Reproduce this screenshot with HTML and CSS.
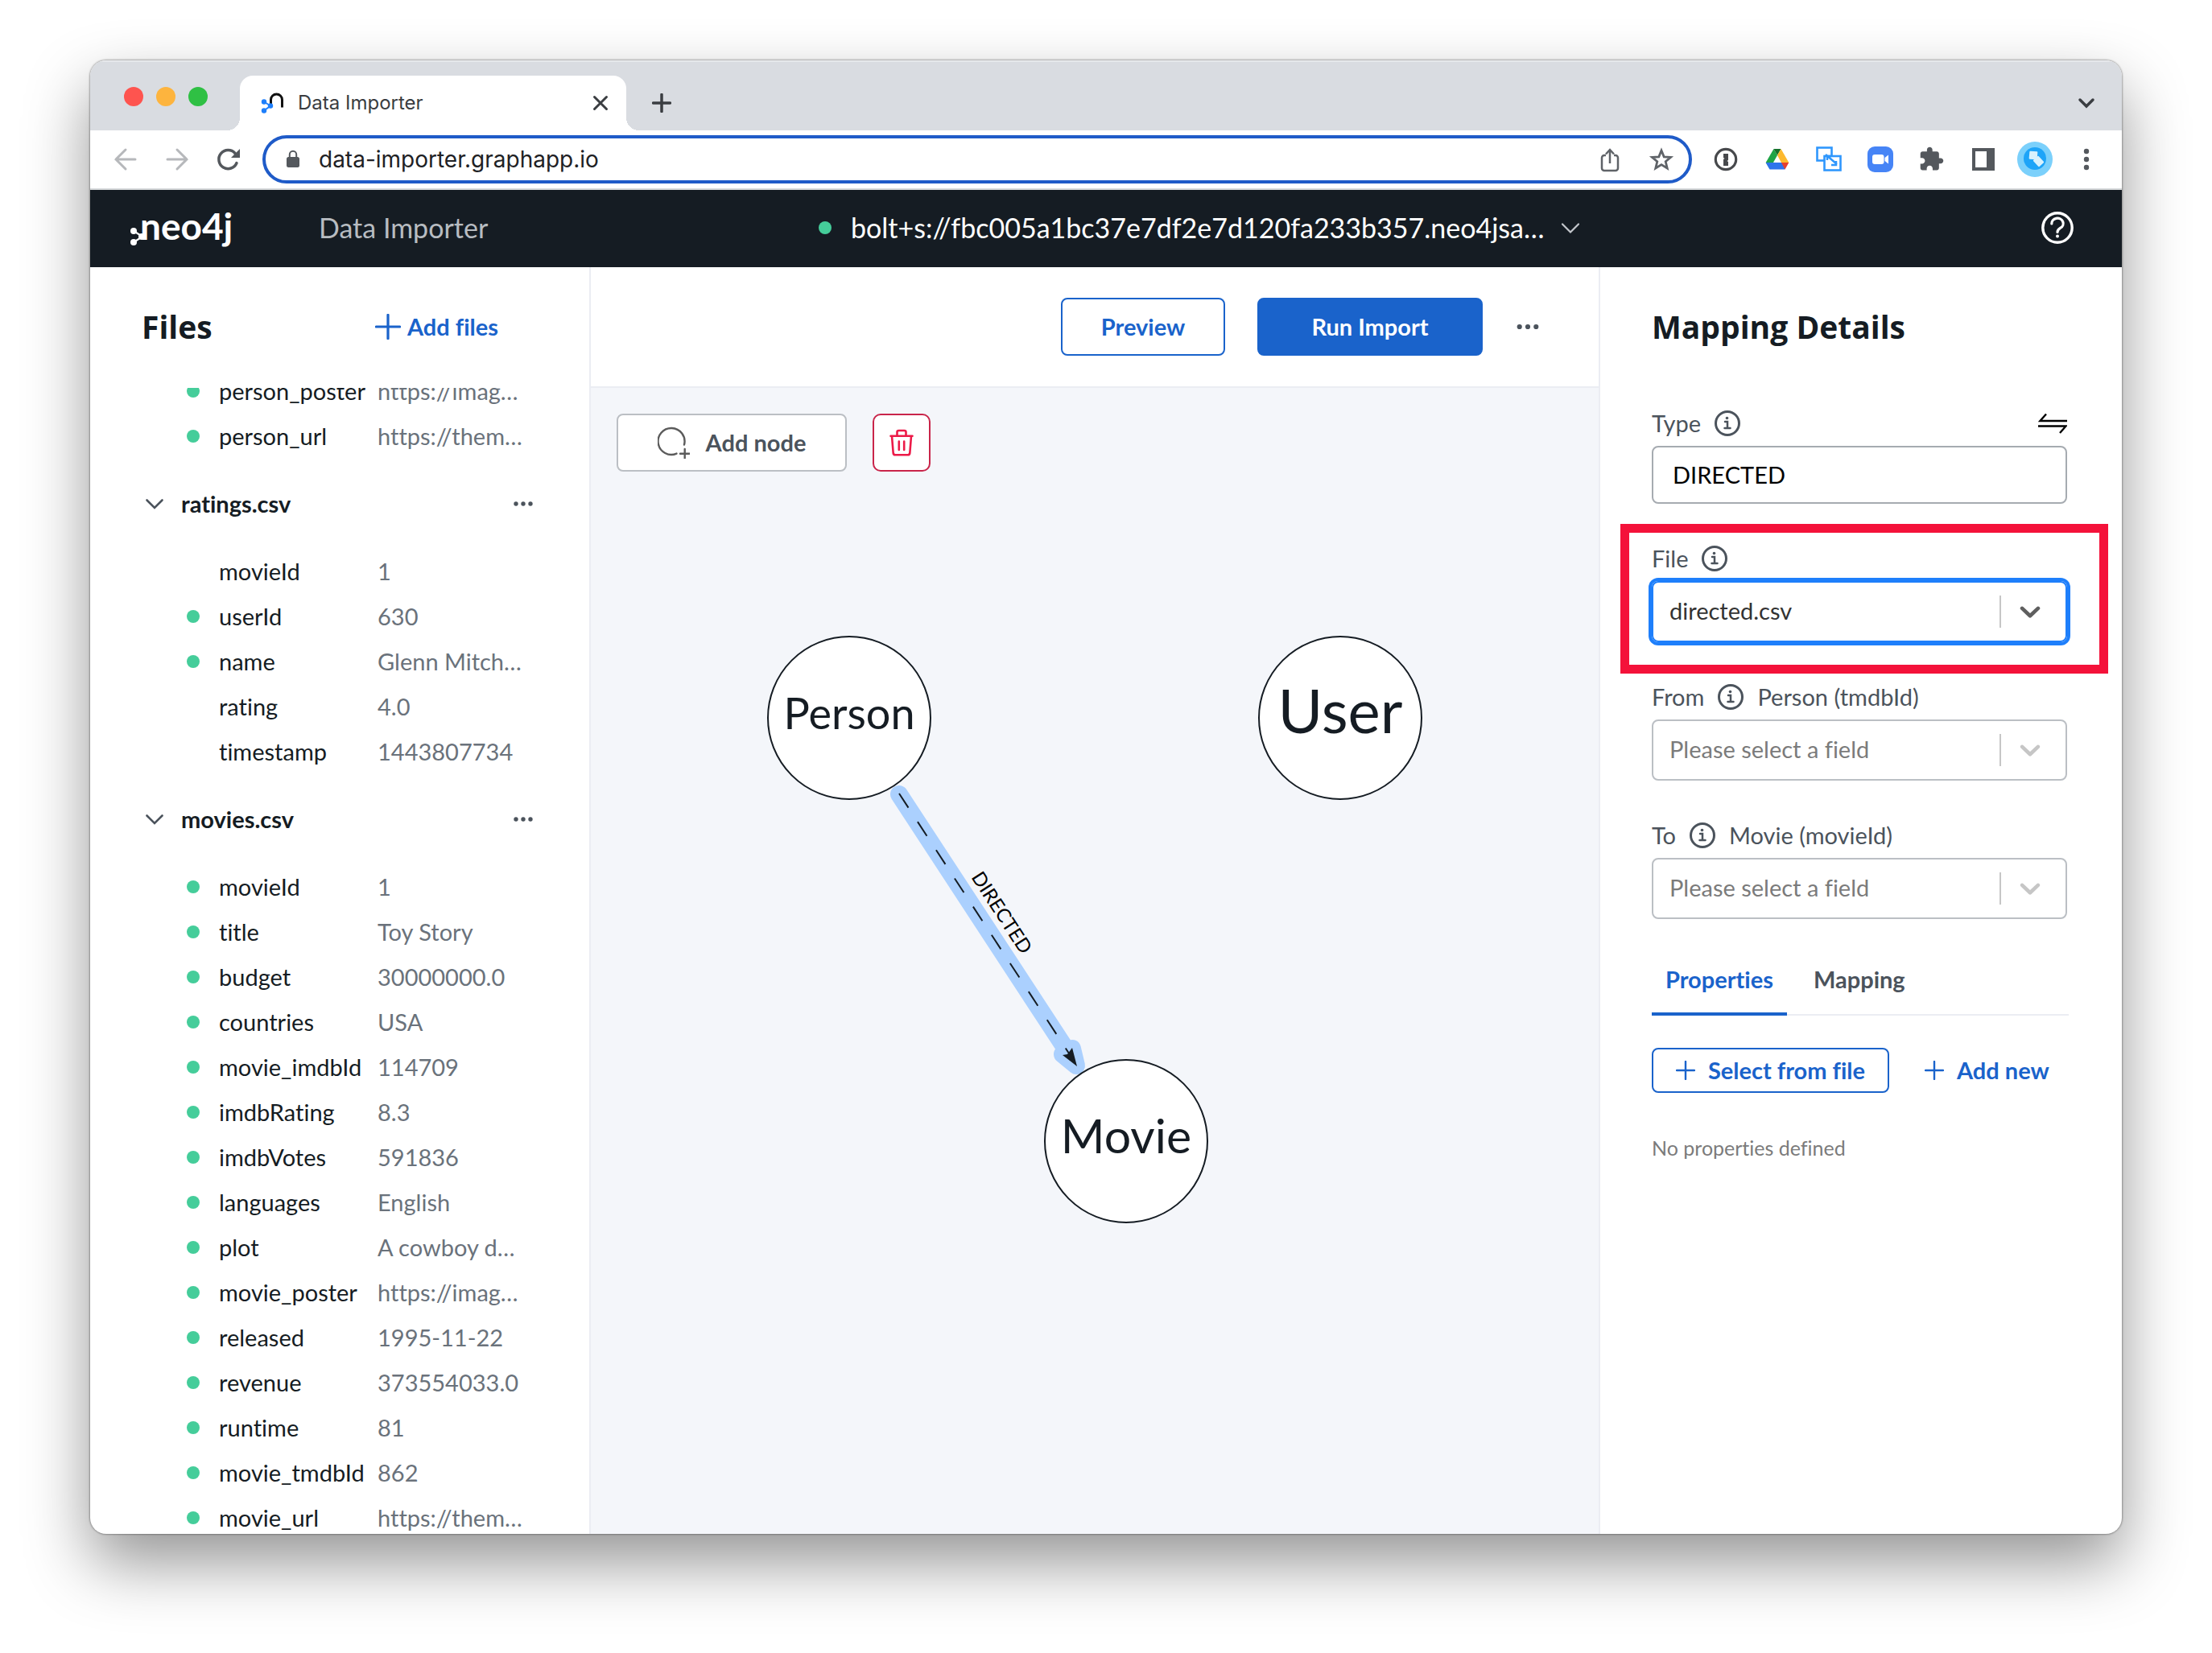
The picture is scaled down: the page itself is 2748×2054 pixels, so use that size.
FILE: index.html
```html
<!DOCTYPE html>
<html lang="en">
<head>
<meta charset="utf-8">
<title>Data Importer</title>
<link rel="stylesheet" href="styles.css">
</head>
<body>
<svg class="defs" aria-hidden="true">
  <symbol id="info" viewBox="0 0 32 32"><circle cx="16" cy="16" r="14.5" fill="none" stroke="currentColor" stroke-width="3"/><circle cx="15.5" cy="9.5" r="1.8" fill="currentColor"/><path d="M13 14h3v8m-3.500 0h7" fill="none" stroke="currentColor" stroke-width="2.500" stroke-linecap="round"/></symbol>
  <symbol id="plus" viewBox="0 0 24 24"><path d="M12 1v22M1 12h22" fill="none" stroke="currentColor" stroke-width="2.400" stroke-linecap="round"/></symbol>
  <symbol id="dots" viewBox="0 0 28 28"><g fill="currentColor"><circle cx="5" cy="14" r="2.700"/><circle cx="14" cy="14" r="2.700"/><circle cx="23" cy="14" r="2.700"/></g></symbol>
  <symbol id="down" viewBox="0 0 24 24"><path d="M2.500 7.500l9.500 9.500 9.500-9.500" fill="none" stroke="currentColor" stroke-width="2.600" stroke-linecap="round"/></symbol>
  <symbol id="down-bold" viewBox="0 0 24 24"><path d="M3.500 8.500l8.500 8 8.500-8" fill="none" stroke="currentColor" stroke-width="4" stroke-linecap="round" stroke-linejoin="round"/></symbol>
</svg>
<div class="window">
  <div class="tabstrip">
    <div class="lights"><span class="light red"></span><span class="light amber"></span><span class="light green"></span></div>
    <div class="browser-tab">
      <svg class="favicon" viewBox="0 0 28 28"><path d="M12.500 19.500V10a7 7 0 0 1 14 0v9.500" fill="none" stroke="#111" stroke-width="3"/><path d="M4 12.500l8 5-8 6" fill="none" stroke="#1e7ffb" stroke-width="2"/><g fill="#1e7ffb"><circle cx="4" cy="12.500" r="3.200"/><circle cx="12" cy="17.500" r="3.200"/><circle cx="4" cy="23.500" r="3.200"/></g></svg>
      <span class="tab-title">Data Importer</span>
      <button class="plain" aria-label="Close tab"><svg class="i24" viewBox="0 0 24 24"><path d="M4.500 4.500l15 15m0-15l-15 15" stroke="#3a3d41" stroke-width="3" stroke-linecap="round"/></svg></button>
    </div>
    <button class="plain new-tab" aria-label="New tab"><svg class="i24" viewBox="0 0 24 24"><path d="M12 1.500v21M1.500 12h21" stroke="#3a3d41" stroke-width="3.500" stroke-linecap="round"/></svg></button>
    <button class="plain tab-search" aria-label="Search tabs"><svg class="i48" viewBox="0 0 48 48"><path d="M16 20l8 8 8-8" fill="none" stroke="#3a3d41" stroke-width="3.500" stroke-linecap="round"/></svg></button>
  </div>
  <div class="toolbar">
    <div class="icons">
      <button class="plain" aria-label="Back"><svg class="i48" viewBox="0 0 48 48"><path d="M36 24H12m12-12L12 24l12 12" fill="none" stroke="#b6b8bb" stroke-width="3" stroke-linecap="round"/></svg></button>
      <button class="plain" aria-label="Forward"><svg class="i48" viewBox="0 0 48 48"><path d="M12 24h24M24 12l12 12-12 12" fill="none" stroke="#b6b8bb" stroke-width="3" stroke-linecap="round"/></svg></button>
      <button class="plain" aria-label="Reload"><svg class="i48" viewBox="0 0 48 48"><path d="M34 28.500A11.500 11.500 0 1 1 32 16.500" fill="none" stroke="#54585d" stroke-width="3.500" stroke-linecap="round"/><path d="M38 11v11H27z" fill="#54585d"/></svg></button>
    </div>
    <div class="omnibox">
      <svg class="i24" viewBox="0 0 24 24"><rect x="4" y="9" width="16" height="13" rx="2.500" fill="#54585d"/><path d="M7.800 9V6a4.200 4.200 0 0 1 8.400 0v3" fill="none" stroke="#54585d" stroke-width="2"/></svg>
      <input class="url" aria-label="Address" value="data-importer.graphapp.io">
      <div class="icons">
        <button class="plain" aria-label="Share"><svg class="i48" viewBox="0 0 48 48"><path d="M19 19h-2a3 3 0 0 0-3 3v13a3 3 0 0 0 3 3h14a3 3 0 0 0 3-3V22a3 3 0 0 0-3-3h-2M24 29V12m-5 5.500l5-5.500 5 5.500" fill="none" stroke="#5f6368" stroke-width="2.500"/></svg></button>
        <button class="plain" aria-label="Bookmark"><svg class="i48" viewBox="0 0 48 48"><path d="M24 13l3.200 7.800 8.400.6-6.400 5.400 2 8.200L24 30.600 16.800 35l2-8.200-6.400-5.400 8.400-.6z" fill="none" stroke="#5f6368" stroke-width="2.800"/></svg></button>
      </div>
    </div>
    <div class="icons">
      <button class="plain" aria-label="Passwords"><svg class="i48" viewBox="0 0 48 48"><circle cx="24" cy="24" r="12.700" fill="#fff" stroke="#47494c" stroke-width="3.200"/><path d="M21 17h6v8l-1.500 1 1.500 1v5h-6v-8l1.500-1-1.500-1z" fill="#47494c"/></svg></button>
      <button class="plain" aria-label="Drive"><svg class="i48" viewBox="0 0 48 48"><path d="M19.500 11L24 19l-9.500 17L9.700 28z" fill="#1ea446"/><path d="M19.500 11h9L24 19z" fill="#16702b"/><path d="M28.500 11L38.300 28H29l-5-9z" fill="#fdb92e"/><path d="M9.700 28H34l-.5 8.600H14.500z" fill="#2d73ec"/><path d="M29 28h9.300l-4.800 8.600z" fill="#e5402f"/></svg></button>
      <button class="plain" aria-label="Windows"><svg class="i48" viewBox="0 0 48 48"><g fill="#fff" stroke="#2f97fd" stroke-width="2.600"><rect x="9.500" y="9.500" width="18" height="16"/><rect x="18.500" y="20" width="20" height="17.500"/></g><path d="M20 18l14 12m-1-4v5h-6M22 25v-5h5" fill="none" stroke="#2f97fd" stroke-width="2.500"/></svg></button>
      <button class="plain" aria-label="Meetings"><svg class="i48" viewBox="0 0 48 48"><rect x="8" y="8" width="32" height="32" rx="9" fill="#4684f6"/><rect x="14" y="18" width="14.500" height="12" rx="3" fill="#fff"/><path d="M29.500 22l4.500-3.500v11L29.500 26z" fill="#fff"/></svg></button>
      <button class="plain" aria-label="Extensions"><svg class="i48" viewBox="0 0 48 48"><path transform="translate(7 7.500) scale(1.360)" d="M20.500 11H19V7c0-1.100-.9-2-2-2h-4V3.500C13 2.120 11.880 1 10.500 1S8 2.120 8 3.500V5H4c-1.100 0-1.990.9-1.990 2v3.800H3.500c1.490 0 2.700 1.210 2.700 2.700s-1.210 2.700-2.700 2.700H2V20c0 1.100.9 2 2 2h3.800v-1.500c0-1.490 1.210-2.700 2.700-2.700 1.490 0 2.700 1.210 2.700 2.700V22H17c1.100 0 2-.9 2-2v-4h1.500c1.380 0 2.500-1.120 2.500-2.500S21.880 11 20.500 11z" fill="#54585d"/></svg></button>
      <button class="plain" aria-label="Side panel"><svg class="i48" viewBox="0 0 48 48"><path d="M10 10h28v28H10zM14 14v20h14V14z" fill="#54585d" fill-rule="evenodd"/></svg></button>
      <button class="plain" aria-label="Profile"><svg class="i48" viewBox="0 0 48 48"><circle cx="24" cy="24" r="22" fill="#7bd0fb"/><circle cx="24" cy="23" r="14" fill="#1ea4f8"/><rect x="17" y="14" width="10" height="10" rx="1" transform="rotate(5 22 19)" fill="#d8f1fd"/><rect x="23" y="22" width="11" height="9" rx="1" transform="rotate(48 28.500 26.500)" fill="#d8f1fd"/></svg></button>
      <button class="plain" aria-label="Browser menu"><svg class="i48" viewBox="0 0 48 48"><g fill="#54585d"><circle cx="24" cy="14" r="3.200"/><circle cx="24" cy="24" r="3.200"/><circle cx="24" cy="34" r="3.200"/></g></svg></button>
    </div>
  </div>

  <header class="app-header">
    <div class="brand">
      <a class="logo" href="#"><svg class="logo-mark" viewBox="0 0 18 22"><path d="M4 4l11 7L4 18" fill="none" stroke="#fff" stroke-width="2.200"/><g fill="#fff"><circle cx="4" cy="4" r="4"/><circle cx="14" cy="11" r="4"/><circle cx="4" cy="18" r="4"/></g></svg>neo4j</a>
      <span class="app-name">Data Importer</span>
    </div>
    <button class="plain connection"><span class="dot"></span>bolt+s://fbc005a1bc37e7df2e7d120fa233b357.neo4jsa…<svg class="i24" viewBox="0 0 24 24"><path d="M2 7.500l10 10 10-10" fill="none" stroke="#c4c8cd" stroke-width="2.200" stroke-linecap="round"/></svg></button>
    <button class="plain" aria-label="Help"><svg class="help" viewBox="0 0 40 40"><circle cx="20" cy="20" r="18.200" fill="none" stroke="#fff" stroke-width="3.400"/><path d="M12.800 15a7.200 6.500 0 1 1 11 5.200c-2.500 1.500-3.800 2.500-3.800 5.300" fill="none" stroke="#fff" stroke-width="3.200" stroke-linecap="round"/><circle cx="20" cy="30.500" r="2" fill="#fff"/></svg></button>
  </header>

  <main class="app">
    <section class="files">
      <div class="files-head">
        <h2>Files</h2>
        <button class="plain link-button add-files"><svg class="i32" aria-hidden="true"><use href="#plus"/></svg>Add files</button>
      </div>
      <div class="file-list">
        <div class="file-scroll">
          <table class="columns">
            <tr><td><span class="dot"></span></td><th scope="row">person_poster</th><td>https://imag…</td></tr>
            <tr><td><span class="dot"></span></td><th scope="row">person_url</th><td>https://them…</td></tr>
          </table>
          <div class="file-head"><svg class="i24"><use href="#down"/></svg><h3>ratings.csv</h3><button class="plain" aria-label="ratings.csv options"><svg class="i28"><use href="#dots"/></svg></button></div>
          <table class="columns">
            <tr><td></td><th scope="row">movieId</th><td>1</td></tr>
            <tr><td><span class="dot"></span></td><th scope="row">userId</th><td>630</td></tr>
            <tr><td><span class="dot"></span></td><th scope="row">name</th><td>Glenn Mitch…</td></tr>
            <tr><td></td><th scope="row">rating</th><td>4.0</td></tr>
            <tr><td></td><th scope="row">timestamp</th><td>1443807734</td></tr>
          </table>
          <div class="file-head"><svg class="i24"><use href="#down"/></svg><h3>movies.csv</h3><button class="plain" aria-label="movies.csv options"><svg class="i28"><use href="#dots"/></svg></button></div>
          <table class="columns">
            <tr><td><span class="dot"></span></td><th scope="row">movieId</th><td>1</td></tr>
            <tr><td><span class="dot"></span></td><th scope="row">title</th><td>Toy Story</td></tr>
            <tr><td><span class="dot"></span></td><th scope="row">budget</th><td>30000000.0</td></tr>
            <tr><td><span class="dot"></span></td><th scope="row">countries</th><td>USA</td></tr>
            <tr><td><span class="dot"></span></td><th scope="row">movie_imdbId</th><td>114709</td></tr>
            <tr><td><span class="dot"></span></td><th scope="row">imdbRating</th><td>8.3</td></tr>
            <tr><td><span class="dot"></span></td><th scope="row">imdbVotes</th><td>591836</td></tr>
            <tr><td><span class="dot"></span></td><th scope="row">languages</th><td>English</td></tr>
            <tr><td><span class="dot"></span></td><th scope="row">plot</th><td>A cowboy d…</td></tr>
            <tr><td><span class="dot"></span></td><th scope="row">movie_poster</th><td>https://imag…</td></tr>
            <tr><td><span class="dot"></span></td><th scope="row">released</th><td>1995-11-22</td></tr>
            <tr><td><span class="dot"></span></td><th scope="row">revenue</th><td>373554033.0</td></tr>
            <tr><td><span class="dot"></span></td><th scope="row">runtime</th><td>81</td></tr>
            <tr><td><span class="dot"></span></td><th scope="row">movie_tmdbId</th><td>862</td></tr>
            <tr><td><span class="dot"></span></td><th scope="row">movie_url</th><td>https://them…</td></tr>
          </table>
        </div>
      </div>
    </section>

    <section class="model">
      <div class="model-bar">
        <button class="button outline">Preview</button>
        <button class="button primary">Run Import</button>
        <button class="plain" aria-label="More"><svg class="i32"><use href="#dots"/></svg></button>
      </div>
      <div class="canvas">
        <svg class="graph" role="img" aria-label="Graph model">
          <g class="halo"><path d="M383 505l212 324"/><path d="M603 842l-17-14 12-7z"/></g>
          <path class="edge" d="M383 504l215 329"/>
          <path class="edge-head" d="M604 843l-18-14 6-1 6-8z"/>
          <text class="edge-label" transform="translate(472 608) rotate(57)">DIRECTED</text>
          <circle class="node" cx="321" cy="410" r="101"/>
          <circle class="node" cx="931" cy="410" r="101"/>
          <circle class="node" cx="665" cy="936" r="101"/>
          <text class="node-label size-m" x="321" y="424">Person</text>
          <text class="node-label size-xl" x="931" y="429">User</text>
          <text class="node-label size-l" x="665" y="951">Movie</text>
        </svg>
        <div class="canvas-tools">
          <button class="button add-node"><svg class="i40" viewBox="0 0 40 40"><path d="M23.500 33.600A16.500 16.500 0 1 1 33 22.500M33.700 28v11.500M28 33.700h11.500" fill="none" stroke="#5b5b5b" stroke-width="2.400" stroke-linecap="round"/></svg>Add node</button>
          <button class="button delete" aria-label="Delete"><svg class="i36" viewBox="0 0 36 36"><path d="M4.500 9.700h27M12.500 9V5a2 2 0 0 1 2-2h7a2 2 0 0 1 2 2v4M6 10l1.700 21a2.500 2.500 0 0 0 2.500 2.200h15.600a2.500 2.500 0 0 0 2.500-2.200L30 10M14.800 16.500v10.500M21.200 16.500v10.500" fill="none" stroke="#ec1a48" stroke-width="2.600" stroke-linecap="round"/></svg></button>
        </div>
      </div>
    </section>

    <section class="details">
      <h2>Mapping Details</h2>
      <div class="field first">
        <div class="label-row"><label for="type">Type</label><svg class="i32"><use href="#info"/></svg><button class="plain swap" aria-label="Reverse direction"><svg class="i36" viewBox="0 0 36 28"><path d="M10 2.500L2.500 11H36M0 17.500h34.500L27 26" fill="none" stroke="#000" stroke-width="2.400"/></svg></button></div>
        <input id="type" class="text-input" value="DIRECTED">
      </div>
      <div class="field highlighted">
        <div class="label-row"><label for="file">File</label><svg class="i32"><use href="#info"/></svg></div>
        <div class="select focused"><select id="file"><option>directed.csv</option></select><span class="select-mark"><svg class="i28"><use href="#down-bold"/></svg></span></div>
      </div>
      <div class="field">
        <div class="label-row"><label for="from">From</label><svg class="i32"><use href="#info"/></svg><span>Person (tmdbId)</span></div>
        <div class="select"><select id="from"><option>Please select a field</option></select><span class="select-mark"><svg class="i28"><use href="#down-bold"/></svg></span></div>
      </div>
      <div class="field">
        <div class="label-row"><label for="to">To</label><svg class="i32"><use href="#info"/></svg><span>Movie (movieId)</span></div>
        <div class="select"><select id="to"><option>Please select a field</option></select><span class="select-mark"><svg class="i28"><use href="#down-bold"/></svg></span></div>
      </div>
      <div class="tabs" role="tablist">
        <button class="plain tab active" role="tab" aria-selected="true">Properties</button>
        <button class="plain tab" role="tab" aria-selected="false">Mapping</button>
      </div>
      <div class="actions">
        <button class="button outline small"><svg class="i24"><use href="#plus"/></svg>Select from file</button>
        <button class="plain link-button"><svg class="i24"><use href="#plus"/></svg>Add new</button>
      </div>
      <p class="empty">No properties defined</p>
    </section>
  </main>
</div>
</body>
</html>
```
FILE: styles.css
```css
* { box-sizing: border-box; }

body {
  margin: 0;
  height: 100vh;
  padding: 75px 112px 148px;
  background: #fff;
  color: #151c23;
  font: 29px/32px Lato, "Noto Sans", sans-serif;
  font-variant-ligatures: none;
}

h2, h3, p { margin: 0; }
button, input, select { font: inherit; color: inherit; font-variant-ligatures: none; }
svg { display: block; flex: none; }
.defs { position: absolute; width: 0; height: 0; }

.i24 { width: 24px; height: 24px; }
.i28 { width: 28px; height: 28px; }
.i32 { width: 32px; height: 32px; }
.i36 { width: 36px; height: 28px; }
.i40 { width: 40px; height: 40px; }
.i48 { width: 48px; height: 48px; }

.plain {
  padding: 0;
  border: 0;
  background: none;
  cursor: pointer;
}

.window {
  display: flex;
  flex-direction: column;
  height: 100%;
  overflow: hidden;
  border-radius: 20px;
  background: #fff;
  box-shadow: 0 0 2px 1px rgba(0, 0, 0, .3), 0 36px 80px rgba(0, 0, 0, .42);
}

/* Browser chrome */
.tabstrip {
  display: flex;
  align-items: flex-end;
  height: 87px;
  padding: 0 20px 0 42px;
  background: #d9dce1;
  box-shadow: inset 0 2px #e6e8eb;
}
.lights { display: flex; gap: 16px; align-self: center; margin-right: 40px; padding-top: 2px; }
.light { width: 24px; height: 24px; border-radius: 50%; }
.red { background: #fe544f; }
.amber { background: #fdb43e; }
.green { background: #2fc044; }

.browser-tab {
  position: relative;
  display: flex;
  align-items: center;
  gap: 18px;
  width: 480px;
  height: 68px;
  padding: 0 20px 0 26px;
  border-radius: 16px 16px 0 0;
  background: #fff;
}
.browser-tab::before,
.browser-tab::after {
  content: "";
  position: absolute;
  bottom: 0;
  width: 16px;
  height: 16px;
}
.browser-tab::before { right: 100%; background: radial-gradient(circle at 0 0, #d9dce1 16px, #fff 16px); }
.browser-tab::after { left: 100%; background: radial-gradient(circle at 100% 0, #d9dce1 16px, #fff 16px); }
.favicon { width: 28px; height: 28px; }
.tab-title { flex: 1; font: 24px/32px Inter, sans-serif; color: #3a3d41; }
.new-tab { display: grid; align-items: center; height: 68px; margin-left: 32px; }
.tab-search { display: grid; align-items: center; height: 68px; margin-left: auto; }

.toolbar {
  display: flex;
  align-items: center;
  gap: 18px;
  height: 74px;
  padding: 0 20px;
  border-bottom: 2px solid #d5d8da;
}
.icons { display: flex; gap: 16px; }
.omnibox {
  display: flex;
  flex: 1;
  align-items: center;
  gap: 20px;
  height: 60px;
  padding: 0 10px 0 22px;
  border: 4px solid #1f5bc8;
  border-radius: 30px;
}
.url {
  flex: 1;
  min-width: 0;
  padding: 0;
  border: 0;
  outline: 0;
  background: none;
  color: #202124;
  font: 28px/32px Inter, sans-serif;
}

/* Application header */
.app-header {
  display: grid;
  grid-template-columns: 855px 1fr auto;
  align-items: center;
  height: 96px;
  padding: 0 60px 2px 50px;
  background: #151c23;
  color: #fff;
}
.brand { display: flex; align-items: center; }
.logo {
  display: flex;
  align-items: center;
  width: 234px;
  padding-bottom: 4px;
  color: #fff;
  font: bold 46px/48px Lato, sans-serif;
  text-decoration: none;
}
.logo-mark { width: 18px; height: 22px; align-self: flex-end; margin-right: -6px; }
.app-name { color: #b8bcc1; font-size: 34px; }
.dot {
  display: block;
  width: 16px;
  height: 16px;
  border-radius: 50%;
  background: #45cd9a;
}
.connection { display: flex; align-items: center; font-size: 34px; }
.connection .dot { margin-right: 24px; }
.connection .i24 { margin-left: 20px; }
.help { width: 40px; height: 40px; }

.app {
  display: grid;
  grid-template-columns: 622px 1fr 650px;
  flex: 1;
  min-height: 0;
}
h2 { font: bold 39px/48px "Open Sans", sans-serif; }

/* Files */
.files {
  display: flex;
  flex-direction: column;
  min-height: 0;
  border-right: 2px solid #ebedf3;
}
.files-head {
  display: flex;
  justify-content: space-between;
  align-items: center;
  padding: 50px 113px 52px 64px;
}
.link-button {
  display: flex;
  align-items: center;
  gap: 16px;
  color: #1a63cb;
  font-weight: bold;
}
.add-files { gap: 8px; }
.file-list { flex: 1; min-height: 0; overflow: hidden; }
.file-scroll { margin-top: -24px; }
.file-head {
  display: flex;
  align-items: center;
  gap: 21px;
  height: 112px;
  padding: 0 68px;
  color: #4b535c;
}
h3 { flex: 1; color: #151c23; font-size: 29px; line-height: 32px; }
.columns {
  table-layout: fixed;
  width: 500px;
  margin-left: 120px;
  border-collapse: collapse;
}
.columns tr { height: 56px; }
.columns td, .columns th { padding: 0; white-space: nowrap; }
.columns th { width: 197px; font-weight: 400; text-align: left; }
.columns td { color: #6a727b; }
.columns td:first-child { width: 40px; }

/* Buttons */
.button {
  display: flex;
  align-items: center;
  justify-content: center;
  height: 72px;
  border: 2px solid;
  border-radius: 8px;
  background: #fff;
  font-weight: bold;
  cursor: pointer;
}
.outline { width: 204px; border-color: #1a63cb; color: #1a63cb; }
.primary { width: 280px; border-color: #1a63cb; background: #1a63cb; color: #fff; }
.small { gap: 16px; width: 295px; height: 56px; }

/* Model canvas */
.model { display: flex; flex-direction: column; min-width: 0; }
.model-bar {
  display: flex;
  align-items: center;
  justify-content: flex-end;
  gap: 40px;
  height: 150px;
  padding-right: 72px;
  border-bottom: 2px solid #ebedf3;
  color: #4b535c;
}
.canvas { position: relative; flex: 1; overflow: hidden; background: #f4f6fa; }
.canvas-tools { position: relative; display: flex; gap: 32px; padding: 32px; }
.add-node { gap: 20px; width: 286px; border-color: #bbbfc4; color: #4b535c; }
.delete { width: 72px; border-color: #c9254a; border-radius: 10px; }
.delete .i36 { height: 36px; }

.graph { position: absolute; inset: 0; width: 100%; height: 100%; }
.halo path { fill: none; stroke: #abd0fe; stroke-width: 22px; stroke-linecap: round; stroke-linejoin: round; }
.edge { stroke: #151c23; stroke-width: 2px; stroke-dasharray: 21 21; }
.edge-head { fill: #151c23; }
.edge-label { fill: #000; font-size: 24px; }
.node { fill: #fff; stroke: #151c23; stroke-width: 2px; }
.node-label { fill: #151c23; text-anchor: middle; }
.size-m { font-size: 54px; }
.size-l { font-size: 59px; }
.size-xl { font-size: 76px; }

/* Mapping details */
.details {
  padding: 50px 66px 50px 64px;
  border-left: 2px solid #ebedf3;
}
.field { position: relative; margin: 52px 2px 0 0; }
.first { margin-top: 80px; }
.label-row {
  display: flex;
  align-items: center;
  gap: 17px;
  margin-bottom: 12px;
  color: #4b535c;
}
.swap { margin-left: auto; }
.text-input {
  display: block;
  width: 100%;
  height: 72px;
  padding: 0 24px 2px;
  border: 2px solid #a6abb1;
  border-radius: 8px;
  outline: 0;
  background: #fff;
  color: #000;
}
.select { display: grid; border-radius: 8px; }
.select > * { grid-area: 1 / 1; }
.select select {
  width: 100%;
  height: 76px;
  padding: 0 20px 2px;
  border: 2px solid #bbbfc4;
  border-radius: 8px;
  outline: 0;
  appearance: none;
  background: #fff;
  color: #7b7b7b;
}
.select-mark {
  display: flex;
  align-items: center;
  justify-self: end;
  align-self: center;
  height: 40px;
  padding: 0 32px 0 22px;
  border-left: 2px solid #c6c6c6;
  color: #c6c6c6;
  pointer-events: none;
}
.focused { box-shadow: 0 0 0 4px #1e7ffb; }
.focused select { border-color: #1e7ffb; color: #333; }
.focused .i28 { color: #5f5f5f; }
.highlighted::after {
  content: "";
  position: absolute;
  inset: -27px -51px -39px -39px;
  border: 11px solid #f4123a;
  pointer-events: none;
}

.tabs { display: flex; gap: 16px; margin-top: 52px; box-shadow: inset 0 -2px #ebedf3; }
.tab {
  height: 68px;
  padding: 0 17px 18px;
  border-bottom: 4px solid transparent;
  color: #4b535c;
  font-weight: bold;
}
.active { border-color: #1a63cb; color: #1a63cb; }
.actions { display: flex; gap: 44px; margin-top: 40px; }
.empty { margin-top: 52px; color: #7b7b7b; font-size: 25px; }
```
